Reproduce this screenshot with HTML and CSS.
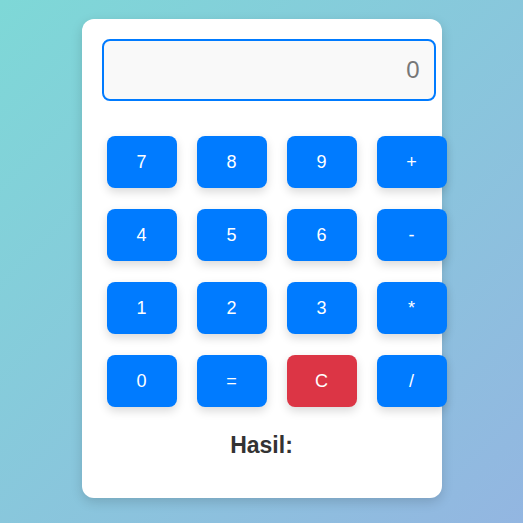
FILE: index.html
```html
<!DOCTYPE html>
<html>
<head>
<meta charset="utf-8">
<link rel="stylesheet" href="styles.css">
</head>
<body>
<div class="calc">
  <input class="display" type="text" value="0" readonly>
  <div class="keys">
    <button class="key">7</button>
    <button class="key">8</button>
    <button class="key">9</button>
    <button class="key">+</button>
    <button class="key">4</button>
    <button class="key">5</button>
    <button class="key">6</button>
    <button class="key">-</button>
    <button class="key">1</button>
    <button class="key">2</button>
    <button class="key">3</button>
    <button class="key">*</button>
    <button class="key">0</button>
    <button class="key">=</button>
    <button class="key clear">C</button>
    <button class="key">/</button>
  </div>
  <div class="result">Hasil:</div>
</div>
</body>
</html>
```
FILE: styles.css
```css
html, body {
  margin: 0;
  padding: 0;
  height: 100%;
}
body {
  background: linear-gradient(135deg, #7ed8d7 0%, #93b6e1 100%);
  font-family: "Liberation Sans", Arial, sans-serif;
  display: flex;
  justify-content: center;
  align-items: flex-start;
}
.calc {
  margin-top: 19px;
  width: 360px;
  height: 479px;
  box-sizing: border-box;
  background: #fff;
  border-radius: 12px;
  padding: 20px;
  box-shadow: 0 4px 12px rgba(0, 0, 0, 0.15);
}
.display {
  display: block;
  box-sizing: border-box;
  width: 334px;
  height: 62px;
  border: 2px solid #007bff;
  border-radius: 8px;
  background: #f9f9f9;
  font-family: "Liberation Sans", Arial, sans-serif;
  font-size: 24px;
  color: #777;
  text-align: right;
  padding: 0 14px;
  outline: none;
  margin: 0 0 30px 0;
}
.keys {
  display: grid;
  grid-template-columns: repeat(4, 70px);
  column-gap: 20px;
  row-gap: 21px;
  padding-left: 5px;
  padding-top: 5px;
}
.key {
  width: 70px;
  height: 52px;
  border: none;
  border-radius: 8px;
  background: #007bff;
  color: #fff;
  font-family: "Liberation Sans", Arial, sans-serif;
  font-size: 18px;
  box-shadow: 0 4px 10px rgba(0, 0, 0, 0.15);
  padding: 0;
}
.key.clear {
  background: #dc3545;
}
.result {
  margin-top: 25px;
  text-align: center;
  font-size: 23px;
  font-weight: bold;
  color: #333;
}
```
